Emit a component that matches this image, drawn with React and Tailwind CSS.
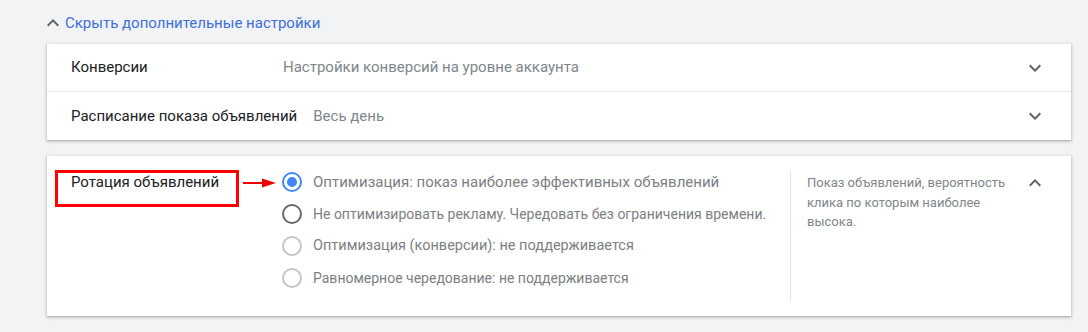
import React from "react";

const ChevronDown = () => (
  <svg width="24" height="24" viewBox="0 0 24 24" className="fill-[#5f6368]">
    <path d="M16.59 8.59L12 13.17 7.41 8.59 6 10l6 6 6-6z" />
  </svg>
);

const ChevronUp = () => (
  <svg width="24" height="24" viewBox="0 0 24 24" className="fill-[#5f6368]">
    <path d="M12 8l-6 6 1.41 1.41L12 10.83l4.59 4.58L18 14z" />
  </svg>
);

const Radio = ({ state }) => {
  if (state === "on") {
    return (
      <span className="w-5 h-5 rounded-full border-2 border-[#4285f4] flex items-center justify-center shrink-0">
        <span className="w-2.5 h-2.5 rounded-full bg-[#4285f4]" />
      </span>
    );
  }
  if (state === "off") {
    return <span className="w-5 h-5 rounded-full border-2 border-[#66696d] shrink-0" />;
  }
  return <span className="w-5 h-5 rounded-full border-2 border-[#c4c7c9] shrink-0" />;
};

const options = [
  { text: "Оптимизация: показ наиболее эффективных объявлений", state: "on", size: "text-[15px]" },
  { text: "Не оптимизировать рекламу. Чередовать без ограничения времени.", state: "off", size: "text-[14px]" },
  { text: "Оптимизация (конверсии): не поддерживается", state: "disabled", size: "text-[14.5px]" },
  { text: "Равномерное чередование: не поддерживается", state: "disabled", size: "text-[14px]" },
];

export default function App() {
  return (
    <div className="w-[1088px] h-[332px] bg-[#f1f3f4] font-['Roboto',sans-serif] text-[15px] overflow-hidden">
      {/* toggle link */}
      <div className="ml-[41px] h-[44px] pt-[11px] flex items-start">
        <ChevronUp />
        <span className="text-[#3f6fd8] leading-6">Скрыть дополнительные настройки</span>
      </div>

      {/* collapsed settings */}
      <div className="ml-[47px] w-[1024px] bg-white shadow-[0_1px_2px_rgba(60,64,67,0.3),0_1px_3px_1px_rgba(60,64,67,0.15)]">
        <div className="h-12 px-6 flex items-center border-b border-[#e8eaed]">
          <span className="min-w-[196px] mr-4 text-[#202124]">Конверсии</span>
          <span className="text-[#80868b]">Настройки конверсий на уровне аккаунта</span>
          <span className="flex-1" />
          <ChevronDown />
        </div>
        <div className="h-12 px-6 flex items-center">
          <span className="min-w-[196px] mr-4 text-[#202124]">Расписание показа объявлений</span>
          <span className="text-[#80868b]">Весь день</span>
          <span className="flex-1" />
          <ChevronDown />
        </div>
      </div>

      {/* ad rotation */}
      <div className="relative mt-4 ml-[47px] w-[1024px] h-[160px] bg-white shadow-[0_1px_2px_rgba(60,64,67,0.3),0_1px_3px_1px_rgba(60,64,67,0.15)] px-6 pt-4 flex">
        <div className="w-[211px] shrink-0 text-[#202124] leading-5">Ротация объявлений</div>

        <div className="flex-1 flex flex-col gap-3">
          {options.map((o) => (
            <div key={o.text} className="flex items-center gap-[11px] h-5">
              <Radio state={o.state} />
              <span className={`text-[#7c8085] whitespace-nowrap ${o.size}`}>{o.text}</span>
            </div>
          ))}
        </div>

        <div className="w-px h-[128px] bg-[#e0e0e0] self-start" />

        <div className="w-[232px] pl-4 pt-[1px] text-[13px] leading-[19.5px] text-[#80868b]">
          Показ объявлений, вероятность клика по которым наиболее высока.
        </div>

        <div className="-mt-[1px]">
          <ChevronUp />
        </div>

        {/* annotation */}
        <div className="absolute left-[8px] top-[14px] w-[184px] h-[37px] border-[3px] border-[#f00]" />
        <svg className="absolute left-[196px] top-[22px]" width="33" height="10" viewBox="0 0 33 10">
          <line x1="0" y1="5" x2="22" y2="5" stroke="#e00" strokeWidth="2" />
          <polygon points="19,0.5 33,5 19,9.5" fill="#e00" />
        </svg>
      </div>
    </div>
  );
}
